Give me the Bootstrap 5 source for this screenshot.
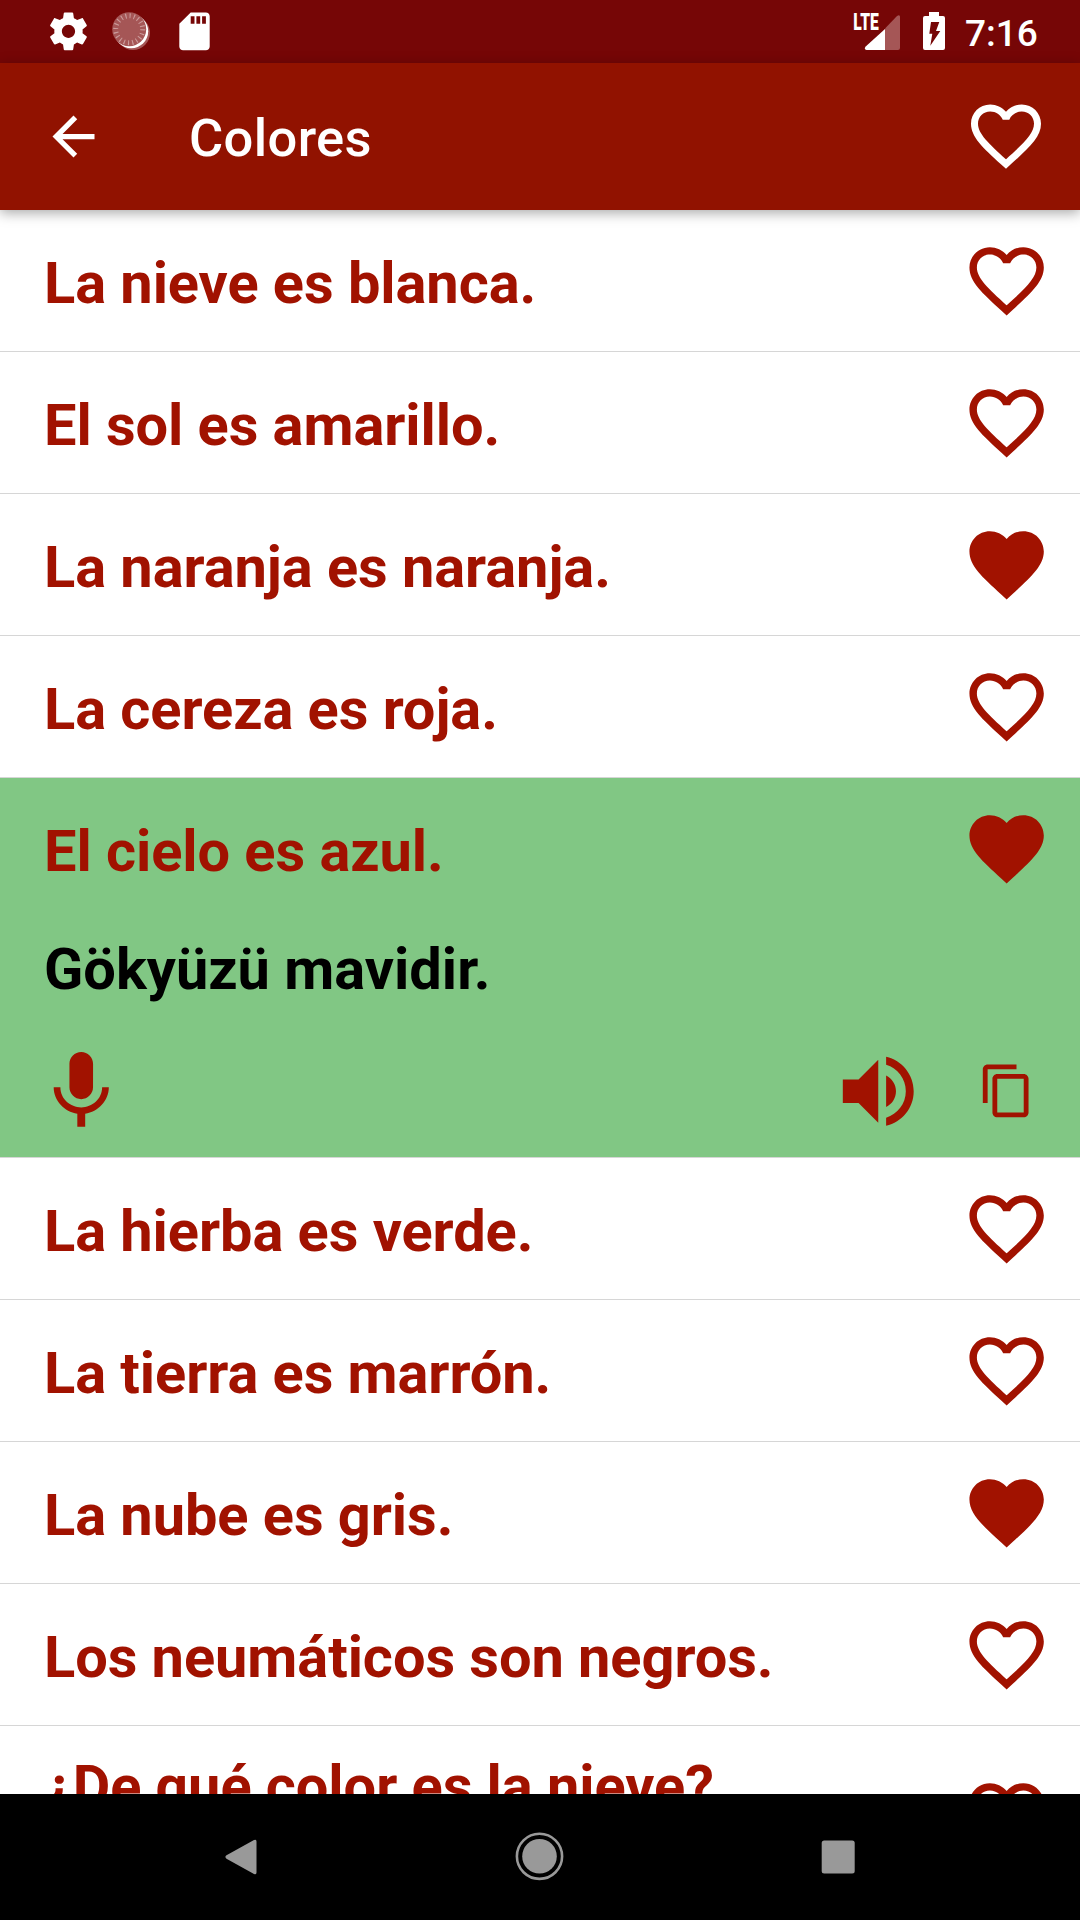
<!DOCTYPE html>
<html lang="es">
<head>
<meta charset="utf-8">
<meta name="viewport" content="width=device-width, initial-scale=1">
<title>Colores</title>
<link href="https://cdn.jsdelivr.net/npm/bootstrap@5.3.0/dist/css/bootstrap.min.css" rel="stylesheet">
<style>
  :root { --brand: #a11200; }
  body { font-family: Roboto, "Noto Sans", sans-serif; width: 1080px; height: 1920px; background: #fff; }
  svg { display: block; flex: none; }
  .status-bar { height: 63px; background: #760606; }
  .app-bar { height: 147px; background: #911200; box-shadow: 0 3px 12px rgba(0,0,0,.34); z-index: 2; padding: 0 32px 0 42px; }
  .app-title { font-size: 52.5px; font-weight: 500; line-height: 63px; margin-left: 84px; padding-top: 4px; letter-spacing: .35px; }
  .app-bar .fav { margin-top: -2px; }
  .phrases { min-height: 0; }
  .phrase { border-bottom: 1px solid #d6d6d6; padding: 0 28.9px 0 44px; color: var(--brand); flex: none; }
  .phrase-head { height: 141px; }
  .phrase-text { font-size: 57.75px; font-weight: 700; line-height: 68px; white-space: nowrap; letter-spacing: -.06px; }
  .phrase-head .phrase-text { margin-top: 4px; }
  .phrase-head svg { margin-top: 1px; }
  .phrase.open { background: #81c784; height: 380px; }
  .phrase.tall .phrase-head { height: 181px; }
  .phrase.tall .phrase-text { margin-top: 26px; align-self: flex-start; }
  .translation { color: #000; margin-top: 16px; letter-spacing: 0; }
  .actions { margin-top: 41px; margin-left: -10.5px; padding-right: 15.2px; }
  .copy-icon { margin-left: 53px; }
  .nav-bar { height: 126px; background: #000; }
</style>
<script src="https://cdn.jsdelivr.net/npm/bootstrap@5.3.0/dist/js/bootstrap.bundle.min.js"></script>
</head>
<body class="d-flex flex-column overflow-hidden">

<svg width="0" height="0" class="position-absolute">
  <symbol id="heart-outline" viewBox="0 0 24 24"><path d="M16.5 3c-1.74 0-3.41.81-4.5 2.09C10.91 3.81 9.24 3 7.5 3 4.42 3 2 5.42 2 8.5c0 3.78 3.4 6.86 8.55 11.54L12 21.35l1.45-1.32C18.6 15.36 22 12.28 22 8.5 22 5.42 19.58 3 16.5 3zm-4.4 15.55l-.1.1-.11-.1C7.14 14.24 4 11.39 4 8.5 4 6.5 5.5 5 7.5 5c1.54 0 3.04.99 3.57 2.36h1.87C13.46 5.99 14.96 5 16.5 5c2 0 3.5 1.5 3.5 3.5 0 2.89-3.14 5.74-7.9 10.05z"/></symbol>
  <symbol id="heart-full" viewBox="0 0 24 24"><path d="M12 21.35l-1.45-1.32C5.4 15.36 2 12.28 2 8.5 2 5.42 4.42 3 7.5 3c1.74 0 3.41.81 4.5 2.09C13.09 3.81 14.76 3 16.5 3 19.58 3 22 5.42 22 8.5c0 3.78-3.4 6.86-8.55 11.54z"/></symbol>
</svg>

<div class="status-bar flex-shrink-0">
  <svg width="1080" height="63" fill="#fff">
    <g transform="translate(45.8 8.6) scale(1.89)"><path d="M19.43 12.98c.04-.32.07-.64.07-.98s-.03-.66-.07-.98l2.11-1.65c.19-.15.24-.42.12-.64l-2-3.46c-.12-.22-.39-.3-.61-.22l-2.49 1c-.52-.4-1.08-.73-1.69-.98l-.38-2.65C14.46 2.18 14.25 2 14 2h-4c-.25 0-.46.18-.49.42l-.38 2.65c-.61.25-1.17.59-1.69.98l-2.49-1c-.23-.09-.49 0-.61.22l-2 3.46c-.13.22-.07.49.12.64l2.11 1.65c-.04.32-.07.65-.07.98s.03.66.07.98l-2.11 1.65c-.19.15-.24.42-.12.64l2 3.46c.12.22.39.3.61.22l2.49-1c.52.4 1.08.73 1.69.98l.38 2.65c.03.24.24.42.49.42h4c.25 0 .46-.18.49-.42l.38-2.65c.61-.25 1.17-.59 1.69-.98l2.49 1c.23.09.49 0 .61-.22l2-3.46c.12-.22.07-.49-.12-.64l-2.11-1.65zM12 15.5c-1.93 0-3.5-1.57-3.5-3.5s1.57-3.5 3.5-3.5 3.5 1.57 3.5 3.5-1.57 3.5-3.5 3.5z"/></g>
    <circle cx="133" cy="33" r="17" fill="#a55656"/>
    <circle cx="131.2" cy="31.2" r="17"/>
    <circle cx="129.2" cy="29.3" r="17" fill="#a55656"/>
    <circle cx="129.2" cy="29.3" r="13.5" fill="none" stroke="#cb9b9b" stroke-width="5" stroke-dasharray="1.1 3.14"/>
    <g transform="translate(171.7 8.6) scale(1.9 1.89)"><path d="M18 2h-8L4.02 8 4 20c0 1.1.9 2 2 2h12c1.1 0 2-.9 2-2V4c0-1.1-.9-2-2-2zm-6 6h-2V4h2v4zm3 0h-2V4h2v4zm3 0h-2V4h2v4z"/></g>
    <text x="853.3" y="29.8" font-size="23" font-weight="900" textLength="25.5" lengthAdjust="spacingAndGlyphs">LTE</text>
    <path d="M885 29v21h-18.500q-3-1-.8-3.500z"/>
    <path d="M885 28.500l12-12.500q3-2 3 1v31q0 2-2 2h-13z" fill="#a55656"/>
    <path fill-rule="evenodd" d="M929 12h10v4h4q2 0 2 2v30q0 2-2 2h-18q-2 0-2-2V18q0-2 2-2h4zM931 22l-1.700 11.700h3l-2 12 10-14.700h-4.300l3.300-9z"/>
    <text x="965" y="46" font-size="37" font-weight="500">7:16</text>
  </svg>
</div>

<header class="app-bar d-flex align-items-center flex-shrink-0 position-relative text-white">
  <svg width="63" height="63" viewBox="0 0 24 24" fill="#fff"><path d="M20 11H7.830l5.590-5.590L12 4l-8 8 8 8 1.410-1.410L7.830 13H20v-2z"/></svg>
  <h1 class="app-title mb-0">Colores</h1>
  <svg class="fav ms-auto" width="84" height="84" fill="#fff"><use href="#heart-outline"/></svg>
</header>

<main class="phrases d-flex flex-column flex-grow-1 overflow-hidden">
  <div class="phrase"><div class="phrase-head d-flex align-items-center justify-content-between"><span class="phrase-text">La nieve es blanca.</span><svg width="89.250" height="89.250" fill="currentColor"><use href="#heart-outline"/></svg></div></div>
  <div class="phrase"><div class="phrase-head d-flex align-items-center justify-content-between"><span class="phrase-text">El sol es amarillo.</span><svg width="89.250" height="89.250" fill="currentColor"><use href="#heart-outline"/></svg></div></div>
  <div class="phrase"><div class="phrase-head d-flex align-items-center justify-content-between"><span class="phrase-text">La naranja es naranja.</span><svg width="89.250" height="89.250" fill="currentColor"><use href="#heart-full"/></svg></div></div>
  <div class="phrase"><div class="phrase-head d-flex align-items-center justify-content-between"><span class="phrase-text">La cereza es roja.</span><svg width="89.250" height="89.250" fill="currentColor"><use href="#heart-outline"/></svg></div></div>
  <div class="phrase open">
    <div class="phrase-head d-flex align-items-center justify-content-between"><span class="phrase-text">El cielo es azul.</span><svg width="89.250" height="89.250" fill="currentColor"><use href="#heart-full"/></svg></div>
    <div class="phrase-text translation">Gökyüzü mavidir.</div>
    <div class="actions d-flex align-items-center">
      <svg width="94.500" height="94.500" viewBox="0 0 24 24" fill="currentColor"><path d="M12 14c1.660 0 2.990-1.340 2.990-3L15 5c0-1.660-1.340-3-3-3S9 3.340 9 5v6c0 1.660 1.340 3 3 3zm5.300-3c0 3-2.540 5.100-5.300 5.100S6.700 14 6.700 11H5c0 3.410 2.720 6.230 6 6.720V21h2v-3.280c3.280-.48 6-3.300 6-6.720h-1.700z"/></svg>
      <svg class="ms-auto" width="94.500" height="94.500" viewBox="0 0 24 24" fill="currentColor"><path d="M3 9v6h4l5 5V4L7 9H3zm13.500 3c0-1.770-1.020-3.290-2.500-4.030v8.050c1.480-.73 2.500-2.250 2.500-4.020zM14 3.230v2.060c2.890.86 5 3.540 5 6.710s-2.110 5.850-5 6.710v2.060c4.010-.91 7-4.490 7-8.770s-2.990-7.860-7-8.770z"/></svg>
      <svg class="copy-icon" width="57.750" height="57.750" viewBox="0 0 24 24" fill="currentColor"><path d="M16 1H4c-1.100 0-2 .9-2 2v14h2V3h12V1zm3 4H8c-1.100 0-2 .9-2 2v14c0 1.100.9 2 2 2h11c1.100 0 2-.9 2-2V7c0-1.100-.9-2-2-2zm0 16H8V7h11v14z"/></svg>
    </div>
  </div>
  <div class="phrase"><div class="phrase-head d-flex align-items-center justify-content-between"><span class="phrase-text">La hierba es verde.</span><svg width="89.250" height="89.250" fill="currentColor"><use href="#heart-outline"/></svg></div></div>
  <div class="phrase"><div class="phrase-head d-flex align-items-center justify-content-between"><span class="phrase-text">La tierra es marrón.</span><svg width="89.250" height="89.250" fill="currentColor"><use href="#heart-outline"/></svg></div></div>
  <div class="phrase"><div class="phrase-head d-flex align-items-center justify-content-between"><span class="phrase-text">La nube es gris.</span><svg width="89.250" height="89.250" fill="currentColor"><use href="#heart-full"/></svg></div></div>
  <div class="phrase"><div class="phrase-head d-flex align-items-center justify-content-between"><span class="phrase-text">Los neumáticos son negros.</span><svg width="89.250" height="89.250" fill="currentColor"><use href="#heart-outline"/></svg></div></div>
  <div class="phrase tall"><div class="phrase-head d-flex align-items-center justify-content-between"><span class="phrase-text">¿De qué color es la nieve?</span><svg width="89.250" height="89.250" fill="currentColor"><use href="#heart-outline"/></svg></div></div>
</main>

<nav class="nav-bar flex-shrink-0">
  <svg width="1080" height="126" fill="#999">
    <path d="M226.500 61.300L254 46.100q2.500-1.300 2.500 1.400v31q0 2.700-2.500 1.400L226.500 64.700q-2.200-1.700 0-3.400z"/>
    <circle cx="539.500" cy="62.300" r="17.300"/>
    <circle cx="539.500" cy="62.300" r="22.600" fill="none" stroke="#999" stroke-width="2.600"/>
    <rect x="821.700" y="46.500" width="33" height="33" rx="2.500"/>
  </svg>
</nav>
</body>
</html>
